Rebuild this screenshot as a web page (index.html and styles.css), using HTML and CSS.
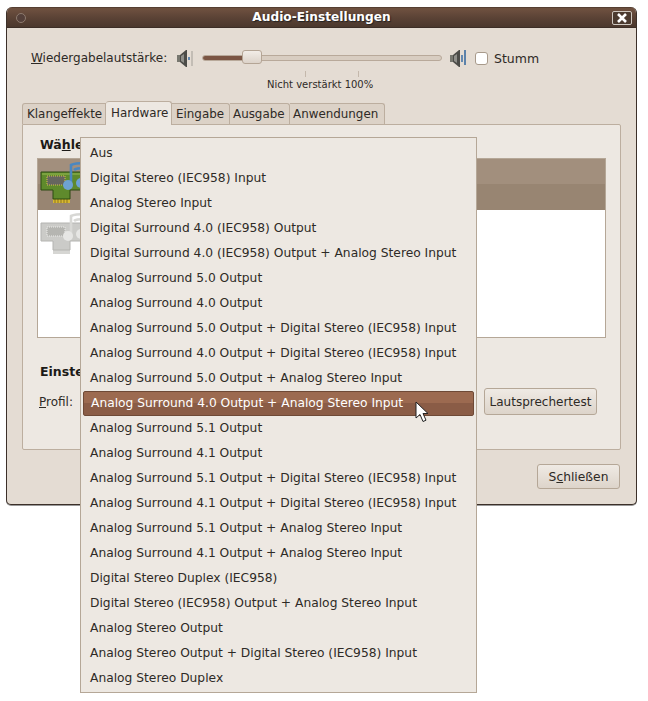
FILE: index.html
```html
<!DOCTYPE html>
<html>
<head>
    <meta name="viewport" content="width=device-width initial-scale=1.0">
    <title>Audio-Einstellungen</title>
    <link rel="stylesheet" href="styles.css">
</head>
<body>
    <div id="window">
        <div id="titlebar">
            <span id="title_orb"></span>
            <span id="title_text">Audio-Einstellungen</span>
            <span id="title_close">
                <svg width="12" height="10" viewBox="0 0 12 10"><path d="M2 1L10 9M10 1L2 9" stroke="#fff" stroke-width="2.6" fill="none"/></svg>
            </span>
        </div>
        <div id="content">
            <div id="volume_row">
                <label id="volume_label"><u>W</u>iedergabelautstärke:</label>
                <svg class="speaker" width="16" height="18" viewBox="0 0 16 18">
                    <path d="M0 6h3v7H0z" fill="#77776f"/>
                    <path d="M3 6l6-5h1v17H9l-6-5z" fill="#4c4c48"/>
                    <path d="M4 7l3-2v9l-3-2z" fill="#8f8f8a"/>
                    <path d="M12 8v3" stroke="#3a6ea5" stroke-width="1.5"/>
                    <path d="M15 2v15" stroke="#b8b3ab" stroke-width="1.5"/>
                </svg>
                <div id="slider">
                    <div id="slider_fill"></div>
                    <div id="slider_thumb"></div>
                </div>
                <svg class="speaker" id="speaker_high" width="16" height="18" viewBox="0 0 16 18">
                    <path d="M0 6h3v7H0z" fill="#77776f"/>
                    <path d="M3 6l6-5h1v17H9l-6-5z" fill="#4c4c48"/>
                    <path d="M4 7l3-2v9l-3-2z" fill="#8f8f8a"/>
                    <path d="M12 6v7" stroke="#3a6ea5" stroke-width="1.5"/>
                    <path d="M15 1v15" stroke="#2f659c" stroke-width="1.5"/>
                </svg>
                <span id="mute_box"></span>
                <span id="mute_label">Stumm</span>
            </div>
            <div id="scale">
                <div class="tick" id="tick_one"></div>
                <div class="tick" id="tick_two"></div>
                <div id="scale_label">Nicht verstärkt 100%</div>
            </div>
            <div id="tabs">
                <div class="tab tab_first">Klangeffekte</div>
                <div class="tab tab_active">Hardware</div>
                <div class="tab tab_input">Eingabe</div>
                <div class="tab tab_output">Ausgabe</div>
                <div class="tab tab_apps">Anwendungen</div>
            </div>
            <div id="panel">
                <div class="section_title">Wä<u>h</u>le</div>
                <div id="device_list">
                    <div class="device device_selected">
                        <svg width="50" height="48" viewBox="0 0 50 48">
                            <path d="M13 38h17v6H13z" fill="#d8b830"/>
                            <path d="M15 39v5M18 39v5M21 39v5M24 39v5M27 39v5" stroke="#8a7420"/>
                            <path d="M1 13h48v18H30v9H13v-9H1z" fill="#5f8a2c" stroke="#2d4a12"/>
                            <path d="M2 14h46v2H2z" fill="#7ba33f"/>
                            <path d="M7 17h18v9H7z" fill="#66665f" stroke="#d8c050" stroke-dasharray="1 1"/>
                            <path d="M31 26V6c4-2 9-2 14-2v5c-5 0-9 0-11 2" fill="none" stroke="#4a87c0" stroke-width="2.6"/>
                            <circle cx="28" cy="26" r="5" fill="#6ea2d2"/>
                            <circle cx="41" cy="24" r="5" fill="#6ea2d2"/>
                        </svg>
                    </div>
                    <div class="device device_off">
                        <svg width="50" height="48" viewBox="0 0 50 48">
                            <path d="M13 38h17v6H13z" fill="#d6d6d3"/>
                            <path d="M1 13h48v18H30v9H13v-9H1z" fill="#cbcbc8" stroke="#b4b4b1"/>
                            <path d="M7 17h18v9H7z" fill="#b5b5b1" stroke="#ececea" stroke-dasharray="1 1"/>
                            <path d="M31 26V6c4-2 9-2 14-2v5c-5 0-9 0-11 2" fill="none" stroke="#d8d8d5" stroke-width="2.6"/>
                            <circle cx="28" cy="26" r="5" fill="#e6e6e4"/>
                            <circle cx="41" cy="24" r="5" fill="#e6e6e4"/>
                        </svg>
                    </div>
                </div>
                <div class="section_title" id="settings_title">Einste</div>
                <div id="profile_row">
                    <label><u>P</u>rofil:</label>
                    <button class="gtk_button" id="test_button">Lautsprechertest</button>
                </div>
            </div>
            <div id="footer">
                <button class="gtk_button" id="close_button">S<u>c</u>hließen</button>
            </div>
        </div>
    </div>
    <div id="menu">
        <div class="menu_item">Aus</div>
        <div class="menu_item">Digital Stereo (IEC958) Input</div>
        <div class="menu_item">Analog Stereo Input</div>
        <div class="menu_item">Digital Surround 4.0 (IEC958) Output</div>
        <div class="menu_item">Digital Surround 4.0 (IEC958) Output + Analog Stereo Input</div>
        <div class="menu_item">Analog Surround 5.0 Output</div>
        <div class="menu_item">Analog Surround 4.0 Output</div>
        <div class="menu_item">Analog Surround 5.0 Output + Digital Stereo (IEC958) Input</div>
        <div class="menu_item">Analog Surround 4.0 Output + Digital Stereo (IEC958) Input</div>
        <div class="menu_item">Analog Surround 5.0 Output + Analog Stereo Input</div>
        <div class="menu_item menu_active">Analog Surround 4.0 Output + Analog Stereo Input</div>
        <div class="menu_item">Analog Surround 5.1 Output</div>
        <div class="menu_item">Analog Surround 4.1 Output</div>
        <div class="menu_item">Analog Surround 5.1 Output + Digital Stereo (IEC958) Input</div>
        <div class="menu_item">Analog Surround 4.1 Output + Digital Stereo (IEC958) Input</div>
        <div class="menu_item">Analog Surround 5.1 Output + Analog Stereo Input</div>
        <div class="menu_item">Analog Surround 4.1 Output + Analog Stereo Input</div>
        <div class="menu_item">Digital Stereo Duplex (IEC958)</div>
        <div class="menu_item">Digital Stereo (IEC958) Output + Analog Stereo Input</div>
        <div class="menu_item">Analog Stereo Output</div>
        <div class="menu_item">Analog Stereo Output + Digital Stereo (IEC958) Input</div>
        <div class="menu_item">Analog Stereo Duplex</div>
    </div>
    <svg id="cursor" width="14" height="22" viewBox="0 0 14 22">
        <path d="M1 1v16l4-3.500 3 7 3-1.300-3-6.700h5z" fill="#fff" stroke="#222" stroke-width="1"/>
    </svg>
</body>
</html>
```

FILE: styles.css
```css
* {
    font-family: "DejaVu Sans", sans-serif;
    box-sizing: border-box;
}
html, body {
    margin: 0;
    background: #fff;
    height: 701px;
    overflow: hidden;
}
body {
    font-size: 12px;
    color: #2e2a26;
    padding: 7px 0 0 6px;
}
#window {
    width: 631px;
    height: 498px;
    background: #e4dcd3;
    border: 1px solid #3c3029;
    border-top: 0;
    border-radius: 6px 6px 5px 5px;
    box-shadow: 0 1px 0 #999;
    overflow: hidden;
}
#titlebar {
    height: 21px;
    display: flex;
    align-items: center;
    justify-content: center;
    background: linear-gradient(#4a372c 0, #6f5140 8%, #5a4235 55%, #4b382d 100%);
    border-bottom: 1px solid #3c2e26;
    position: relative;
}
#title_text {
    color: #fff;
    font-weight: bold;
    font-size: 12.2px;
    text-shadow: 1px 1px 1px #222;
    margin-top: -1px;
}
#title_orb {
    position: absolute;
    left: 9px;
    top: 6px;
    width: 10px;
    height: 10px;
    border-radius: 50%;
    border: 1px solid #8d7a6e;
    background: #54403a;
}
#title_close {
    position: absolute;
    right: 4px;
    top: 4px;
    width: 20px;
    height: 14px;
    border: 1px solid #cfc8c0;
    border-radius: 2px;
    display: flex;
    align-items: center;
    justify-content: center;
    background: #4b3a2f;
}
#content {
    padding: 0 16px 0 15px;
}
#volume_row {
    display: flex;
    align-items: center;
    height: 20px;
    margin-top: 20px;
    padding-left: 9px;
}
#volume_label {
    width: 146px;
}
#slider {
    margin-left: 9px;
    width: 240px;
    height: 6px;
    border: 1px solid #b8a99a;
    border-radius: 3px;
    background: #d8cdc1;
    position: relative;
}
#slider_fill {
    width: 42px;
    height: 4px;
    background: #7b5543;
    border-radius: 2px;
}
#slider_thumb {
    position: absolute;
    left: 39px;
    top: -6px;
    width: 20px;
    height: 14px;
    border: 1px solid #b4a595;
    border-radius: 3px;
    background: linear-gradient(#f2ede7, #dcd3c9);
}
#speaker_high {
    margin-left: 8px;
}
#mute_box {
    width: 13px;
    height: 13px;
    margin-left: 9px;
    border: 1px solid #a89a8b;
    border-radius: 3px;
    background: #fff;
}
#mute_label {
    margin-left: 6px;
    font-size: 12.5px;
}
#scale {
    height: 33px;
    position: relative;
    font-size: 10px;
}
.tick {
    position: absolute;
    top: 3px;
    width: 1px;
    height: 6px;
    background: #c4b8ab;
}
#tick_one {
    left: 283px;
}
#tick_two {
    left: 336px;
}
#scale_label {
    position: absolute;
    left: 245px;
    top: 11px;
}
#tabs {
    display: flex;
    align-items: flex-end;
    height: 23px;
}
.tab {
    height: 21px;
    line-height: 20px;
    padding-left: 3px;
    background: #dcd2c7;
    border: 1px solid #bcae9f;
    border-bottom: 0;
    border-left: 0;
    border-radius: 0 3px 0 0;
    font-size: 11.9px;
    white-space: nowrap;
}
.tab_first {
    width: 84px;
    padding-left: 4px;
    border-left: 1px solid #bcae9f;
    border-radius: 3px 0 0 0;
}
.tab_active {
    width: 66px;
    height: 24px;
    line-height: 22px;
    padding-left: 5px;
    margin-bottom: -1px;
    background: #ede8e2;
    border-radius: 3px 3px 0 0;
    position: relative;
}
.tab_input {
    width: 58px;
    padding-left: 4px;
}
.tab_output {
    width: 60px;
}
.tab_apps {
    width: 95px;
}
#panel {
    width: 599px;
    height: 326px;
    background: #ede8e2;
    border: 1px solid #bcae9f;
    border-radius: 0 2px 2px 2px;
    padding: 12px 14px 0;
}
.section_title {
    font-weight: bold;
    color: #1c1a17;
    padding-left: 3px;
    height: 21px;
    white-space: nowrap;
    font-size: 12.5px;
}
#device_list {
    width: 569px;
    height: 180px;
    background: #fff;
    border: 1px solid #b5a797;
}
.device {
    height: 51px;
    padding: 0 0 0 2px;
}
.device_selected {
    background: linear-gradient(#a28f7d 0, #a28f7d 50%, #988572 50%, #988572 100%);
}
#settings_title {
    margin-top: 26px;
}
#profile_row {
    display: flex;
    align-items: center;
    justify-content: space-between;
    height: 27px;
    margin-top: 3px;
    padding: 0 9px 0 2px;
}
.gtk_button {
    font-size: 12px;
    color: #2e2a26;
    border: 1px solid #b5a797;
    border-radius: 3px;
    background: linear-gradient(#efeae4, #ddd4ca);
    padding: 0;
}
#test_button {
    width: 113px;
    height: 27px;
}
#footer {
    display: flex;
    justify-content: flex-end;
    padding-top: 14px;
}
#close_button {
    width: 83px;
    height: 25px;
    font-size: 12.3px;
}
#menu {
    position: absolute;
    left: 80px;
    top: 137px;
    width: 397px;
    height: 556px;
    padding-top: 3px;
    background: #ede8e2;
    border: 1px solid #b5a797;
    overflow: hidden;
    font-size: 12.27px;
}
.menu_item {
    height: 25px;
    line-height: 24px;
    padding-left: 9px;
    white-space: nowrap;
}
.menu_active {
    margin: 0 2px;
    padding-left: 7px;
    color: #fff;
    background: linear-gradient(#9c6a50 0, #9c6a50 46%, #8a5c46 46%, #8a5c46 100%);
    border: 1px solid #6e4936;
    border-radius: 2px;
    line-height: 22px;
}
#cursor {
    position: absolute;
    left: 415px;
    top: 401px;
}
```
